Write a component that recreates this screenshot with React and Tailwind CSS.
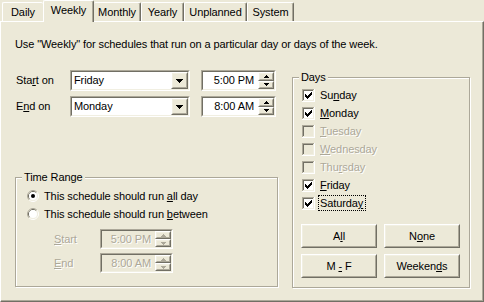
import React from 'react';

function Raised({ className = '', children }) {
  return (
    <div className={`border border-t-white border-l-white border-r-[#716F64] border-b-[#716F64] bg-[#ECE9D8] ${className}`}>
      <div className="w-full h-full border border-t-[#F1EFE2] border-l-[#F1EFE2] border-r-[#ACA899] border-b-[#ACA899] flex items-center justify-center">
        {children}
      </div>
    </div>
  );
}

function Sunken({ className = '', disabled, children }) {
  return (
    <div className={`border border-t-[#ACA899] border-l-[#ACA899] border-r-white border-b-white ${className}`}>
      <div className={`w-full h-full border border-t-[#716F64] border-l-[#716F64] border-r-[#F1EFE2] border-b-[#F1EFE2] flex items-center ${disabled ? 'bg-[#ECE9D8]' : 'bg-white'}`}>
        {children}
      </div>
    </div>
  );
}

function DownArrow() {
  return (
    <svg width="7" height="4" viewBox="0 0 7 4" shapeRendering="crispEdges">
      <rect x="0" y="0" width="7" height="1" fill="#000" />
      <rect x="1" y="1" width="5" height="1" fill="#000" />
      <rect x="2" y="2" width="3" height="1" fill="#000" />
      <rect x="3" y="3" width="1" height="1" fill="#000" />
    </svg>
  );
}

function SpinArrow({ up, disabled }) {
  const c = disabled ? '#ACA899' : '#000';
  return (
    <svg width="5" height="3" viewBox="0 0 5 3" shapeRendering="crispEdges">
      {up ? (
        <>
          <rect x="2" y="0" width="1" height="1" fill={c} />
          <rect x="1" y="1" width="3" height="1" fill={c} />
          <rect x="0" y="2" width="5" height="1" fill={c} />
        </>
      ) : (
        <>
          <rect x="0" y="0" width="5" height="1" fill={c} />
          <rect x="1" y="1" width="3" height="1" fill={c} />
          <rect x="2" y="2" width="1" height="1" fill={c} />
        </>
      )}
    </svg>
  );
}

function Combo({ value }) {
  return (
    <Sunken className="w-[120px] h-[21px]">
      <span className="flex-1 pl-[2px]">{value}</span>
      <Raised className="w-[17px] h-[17px]">
        <DownArrow />
      </Raised>
    </Sunken>
  );
}

function TimeBox({ value, disabled, className = '' }) {
  return (
    <Sunken disabled={disabled} className={className}>
      <span className={`flex-1 text-right pr-[4px] ${disabled ? 'text-[#ACA899] [text-shadow:1px_1px_0_#fff]' : ''}`}>{value}</span>
      <div className="w-[16px] h-full flex flex-col">
        <Raised className="w-full flex-1">
          <SpinArrow up disabled={disabled} />
        </Raised>
        <Raised className="w-full flex-1">
          <SpinArrow disabled={disabled} />
        </Raised>
      </div>
    </Sunken>
  );
}

function CheckBox({ checked, disabled }) {
  const check = [
    [6, 0, 1], [5, 1, 2], [0, 2, 1], [4, 2, 3], [0, 3, 2], [3, 3, 3], [0, 4, 5], [1, 5, 3], [2, 6, 1],
  ];
  return (
    <svg width="13" height="13" viewBox="0 0 13 13" shapeRendering="crispEdges" className="shrink-0">
      <rect x="0" y="0" width="13" height="13" fill="#fff" />
      <rect x="0" y="0" width="12" height="1" fill="#ACA899" />
      <rect x="0" y="0" width="1" height="12" fill="#ACA899" />
      <rect x="1" y="1" width="10" height="1" fill="#716F64" />
      <rect x="1" y="1" width="1" height="10" fill="#716F64" />
      <rect x="1" y="11" width="11" height="1" fill="#F1EFE2" />
      <rect x="11" y="1" width="1" height="11" fill="#F1EFE2" />
      <rect x="2" y="2" width="9" height="9" fill={disabled ? '#ECE9D8' : '#fff'} />
      {checked && check.map(([x, y, w], i) => (
        <rect key={i} x={3 + x} y={3 + y} width={w} height="1" fill="#000" />
      ))}
    </svg>
  );
}

function Radio({ checked }) {
  return (
    <svg width="12" height="12" viewBox="0 0 12 12" className="shrink-0">
      <path d="M2.11 9.89 A5.5 5.5 0 0 1 9.89 2.11" stroke="#ACA899" strokeWidth="1" fill="none" />
      <path d="M9.89 2.11 A5.5 5.5 0 0 1 2.11 9.89" stroke="#fff" strokeWidth="1" fill="none" />
      <path d="M2.82 9.18 A4.5 4.5 0 0 1 9.18 2.82" stroke="#716F64" strokeWidth="1" fill="none" />
      <path d="M9.18 2.82 A4.5 4.5 0 0 1 2.82 9.18" stroke="#F1EFE2" strokeWidth="1" fill="none" />
      <circle cx="6" cy="6" r="4" fill="#fff" />
      {checked && <circle cx="6" cy="6" r="2" fill="#000" />}
    </svg>
  );
}

const dis = 'text-[#ACA899] [text-shadow:1px_1px_0_#fff]';

function DayRow({ children, checked, disabled, focus }) {
  return (
    <div className="h-[18px] flex items-center gap-[5px]">
      <CheckBox checked={checked} disabled={disabled} />
      {focus ? (
        <span className="-ml-[2px] pl-[1px] pr-[2px] border border-dotted border-black leading-[14px]">{children}</span>
      ) : (
        <span className={disabled ? dis : ''}>{children}</span>
      )}
    </div>
  );
}

function Tab({ label, w, selected, noLeft, noRight }) {
  if (selected) {
    return (
      <div className={`${w} h-[22px] -mb-px relative z-10 bg-[#ECE9D8] border-t border-l border-t-white border-l-white border-r border-r-[#716F64] shadow-[inset_-1px_0_0_#ACA899] rounded-t-[2px] flex items-center justify-center pb-[3px]`}>
        {label}
      </div>
    );
  }
  return (
    <div className={`${w} h-[19px] border-t border-t-white ${noLeft ? '' : 'border-l border-l-white'} ${noRight ? '' : 'border-r border-r-[#716F64] shadow-[inset_-1px_0_0_#ACA899]'} rounded-t-[2px] flex items-center justify-center pt-[1px]`}>
      {label}
    </div>
  );
}

export default function App() {
  return (
    <div className="w-[484px] h-[302px] bg-[#ECE9D8] text-black text-[11px] leading-[13px] tracking-[-0.1px] font-['Liberation_Sans',Arial,sans-serif] flex flex-col overflow-hidden select-none">
      <div className="h-[21px] shrink-0 flex items-end pl-[2px]">
        <Tab label="Daily" w="w-[41px]" noRight />
        <Tab label="Weekly" w="w-[51px]" selected />
        <Tab label="Monthly" w="w-[47px]" noLeft />
        <Tab label="Yearly" w="w-[43px]" />
        <Tab label="Unplanned" w="w-[63px]" />
        <Tab label="System" w="w-[47px]" />
      </div>
      <div className="flex-1 border-l border-t border-l-white border-t-white border-r border-b border-r-[#716F64] border-b-[#716F64] shadow-[inset_-1px_-1px_0_#ACA899] pl-[14px] pt-[16px]">
        <div>Use "Weekly" for schedules that run on a particular day or days of the week.</div>
        <div className="flex mt-[19px]">
          <div className="w-[263px] flex flex-col">
            <div className="flex items-center h-[21px]">
              <span className="w-[55px] pl-[1px]">Sta<u>r</u>t on</span>
              <Combo value="Friday" />
              <TimeBox value="5:00 PM" className="ml-[11px] w-[75px] h-[21px]" />
            </div>
            <div className="flex items-center h-[21px] mt-[5px]">
              <span className="w-[55px] pl-[1px]">E<u>n</u>d on</span>
              <Combo value="Monday" />
              <TimeBox value="8:00 AM" className="ml-[11px] w-[75px] h-[21px]" />
            </div>
            <fieldset className="mt-[54px] h-[116px] w-full border border-[#ACA899] shadow-[inset_1px_1px_0_#fff,1px_1px_0_#fff]">
              <legend className="ml-[6px] px-[2px] bg-[#ECE9D8] leading-[13px]">Time Range</legend>
              <div className="pl-[11px] mt-[3px]">
                <div className="h-[18px] flex items-center gap-[5px]">
                  <Radio checked />
                  <span>This schedule should run <u>a</u>ll day</span>
                </div>
                <div className="h-[18px] flex items-center gap-[5px]">
                  <Radio />
                  <span>This schedule should run <u>b</u>etween</span>
                </div>
              </div>
              <div className="pl-[38px] mt-[6px] flex items-center h-[20px]">
                <span className={`w-[46px] ${dis}`}><u>S</u>tart</span>
                <TimeBox value="5:00 PM" disabled className="w-[73px] h-[20px]" />
              </div>
              <div className="pl-[38px] mt-[4px] flex items-center h-[20px]">
                <span className={`w-[46px] ${dis}`}><u>E</u>nd</span>
                <TimeBox value="8:00 AM" disabled className="w-[73px] h-[20px]" />
              </div>
            </fieldset>
          </div>
          <fieldset className="ml-[14px] mt-[1px] w-[178px] h-[217px] border border-[#ACA899] shadow-[inset_1px_1px_0_#fff,1px_1px_0_#fff]">
            <legend className="ml-[6px] px-[2px] bg-[#ECE9D8] leading-[13px]">Days</legend>
            <div className="pl-[9px] mt-[2px]">
              <DayRow checked>Su<u>n</u>day</DayRow>
              <DayRow checked><u>M</u>onday</DayRow>
              <DayRow disabled><u>T</u>uesday</DayRow>
              <DayRow disabled><u>W</u>ednesday</DayRow>
              <DayRow disabled>Thu<u>r</u>sday</DayRow>
              <DayRow checked><u>F</u>riday</DayRow>
              <DayRow checked focus>Saturda<u>y</u></DayRow>
            </div>
            <div className="pl-[8px] mt-[12px] flex flex-col gap-[6px]">
              <div className="flex gap-[7px]">
                <Raised className="w-[76px] h-[24px]"><span>A<u>l</u>l</span></Raised>
                <Raised className="w-[76px] h-[24px]"><span>N<u>o</u>ne</span></Raised>
              </div>
              <div className="flex gap-[7px]">
                <Raised className="w-[76px] h-[24px]"><span>M <u>-</u> F</span></Raised>
                <Raised className="w-[76px] h-[24px]"><span>Weeken<u>d</u>s</span></Raised>
              </div>
            </div>
          </fieldset>
        </div>
      </div>
    </div>
  );
}
